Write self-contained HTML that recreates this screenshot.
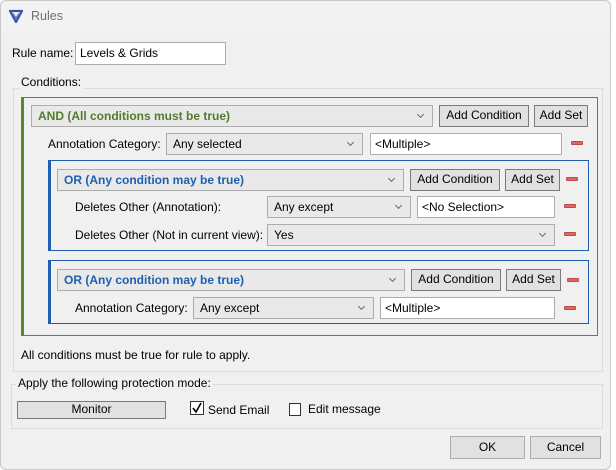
<!DOCTYPE html>
<html><head><style>
*{box-sizing:border-box}
body{margin:0;width:616px;height:470px;background:#fff;font-family:"Liberation Sans",sans-serif;font-size:12px;color:#000;position:relative;overflow:hidden}
.win{position:absolute;left:0;top:0;width:611px;height:470px;background:#f0f0f0;border-radius:6px;overflow:hidden}
.frame{position:absolute;left:0;top:0;width:611px;height:470px;border:1px solid #c8c8c8;border-radius:6px}
.title{position:absolute;left:0;top:0;width:100%;height:32px;background:#f3f3f3}
.a{position:absolute;white-space:nowrap}
.dd{position:absolute;height:22px;background:#e9e9e9;border:1px solid #adadad;padding:3px 6px;line-height:14px}
.dd:after{content:"";position:absolute;right:9px;top:6px;width:4px;height:4px;border-right:1px solid #666;border-bottom:1px solid #666;transform:rotate(45deg)}
.in{position:absolute;height:22px;background:#fff;border:1px solid #adadad;padding:3px 4px;line-height:14px}
.btn{position:absolute;height:22px;background:#e1e1e1;border:1px solid #7a7a7a;text-align:center;line-height:19px}
.m{position:absolute;width:12px;height:4px;background:#e06666;border:1px solid #c04a4a;border-radius:1px}
.grp{position:absolute;border:1px solid #dcdcdc}
.lbl{position:absolute;background:#f0f0f0;padding:0 2px}
.g{color:#4f7d2b;font-weight:bold}
.b{color:#1f5fb0;font-weight:bold}
.cb{position:absolute;width:14px;height:14px;border:1px solid #333;background:#fff}
</style></head><body>
<div class="win">
<div class="title"></div>
<svg class="a" style="left:8px;top:8px" width="16" height="16" viewBox="0 0 16 16"><path d="M2 3 L14 3 L8 14 Z" fill="none" stroke="#3a4fa8" stroke-width="2.2" stroke-linejoin="round"/><path d="M5 5.5 L8 10 L11 5.5" fill="none" stroke="#6a7bc8" stroke-width="1.5"/></svg>
<div class="a" style="left:31px;top:9px;color:#707070;font-size:12.5px">Rules</div>

<div class="a" style="left:12px;top:46px">Rule name:</div>
<div class="in" style="left:75px;top:42px;width:151px;height:23px">Levels &amp; Grids</div>

<div class="grp" style="left:13px;top:88px;width:590px;height:284px"></div>
<div class="lbl a" style="left:19px;top:75px">Conditions:</div>

<div class="a" style="left:21px;top:97px;width:577px;height:239px;border:1px solid #5a8a2f;border-left:3px solid #5a8a2f"></div>
<div class="dd g" style="left:31px;top:105px;width:402px">AND (All conditions must be true)</div>
<div class="btn" style="left:439px;top:105px;width:90px">Add Condition</div>
<div class="btn" style="left:534px;top:105px;width:54px">Add Set</div>

<div class="a" style="left:48px;top:137px">Annotation Category:</div>
<div class="dd" style="left:166px;top:133px;width:197px">Any selected</div>
<div class="in" style="left:370px;top:133px;width:192px">&lt;Multiple&gt;</div>
<div class="m" style="left:571px;top:141px"></div>

<div class="a" style="left:48px;top:160px;width:541px;height:91px;border:1px solid #1f5fb0;border-left:3px solid #1f5fb0"></div>
<div class="dd b" style="left:57px;top:169px;width:347px">OR (Any condition may be true)</div>
<div class="btn" style="left:410px;top:169px;width:90px">Add Condition</div>
<div class="btn" style="left:505px;top:169px;width:55px">Add Set</div>
<div class="m" style="left:566px;top:177px"></div>

<div class="a" style="left:75px;top:200px">Deletes Other (Annotation):</div>
<div class="dd" style="left:267px;top:196px;width:144px">Any except</div>
<div class="in" style="left:417px;top:196px;width:138px">&lt;No Selection&gt;</div>
<div class="m" style="left:564px;top:204px"></div>

<div class="a" style="left:75px;top:228px">Deletes Other (Not in current view):</div>
<div class="dd" style="left:267px;top:224px;width:288px">Yes</div>
<div class="m" style="left:564px;top:232px"></div>

<div class="a" style="left:48px;top:260px;width:541px;height:64px;border:1px solid #1f5fb0;border-left:3px solid #1f5fb0"></div>
<div class="dd b" style="left:57px;top:269px;width:348px">OR (Any condition may be true)</div>
<div class="btn" style="left:411px;top:269px;width:90px">Add Condition</div>
<div class="btn" style="left:506px;top:269px;width:55px">Add Set</div>
<div class="m" style="left:567px;top:278px"></div>

<div class="a" style="left:75px;top:301px">Annotation Category:</div>
<div class="dd" style="left:193px;top:297px;width:181px">Any except</div>
<div class="in" style="left:380px;top:297px;width:175px">&lt;Multiple&gt;</div>
<div class="m" style="left:564px;top:306px"></div>

<div class="a" style="left:21px;top:348px">All conditions must be true for rule to apply.</div>

<div class="grp" style="left:11px;top:384px;width:592px;height:45px"></div>
<div class="lbl a" style="left:16px;top:376px">Apply the following protection mode:</div>
<div class="btn" style="left:17px;top:401px;width:149px;height:18px;line-height:15px">Monitor</div>
<div class="cb" style="left:190px;top:401px"></div>
<svg class="a" style="left:191px;top:402px" width="12" height="12" viewBox="0 0 12 12"><path d="M2 6 L5 10 L10 1" fill="none" stroke="#000" stroke-width="1.6"/></svg>
<div class="a" style="left:208px;top:403px">Send Email</div>
<div class="cb" style="left:289px;top:403px;width:12px;height:13px"></div>
<div class="a" style="left:308px;top:402px">Edit message</div>

<div class="btn" style="left:450px;top:436px;width:75px;height:23px;line-height:20px;border-color:#adadad">OK</div>
<div class="btn" style="left:530px;top:436px;width:71px;height:23px;line-height:20px;border-color:#adadad">Cancel</div>
</div>
<div class="frame"></div>
</body></html>
